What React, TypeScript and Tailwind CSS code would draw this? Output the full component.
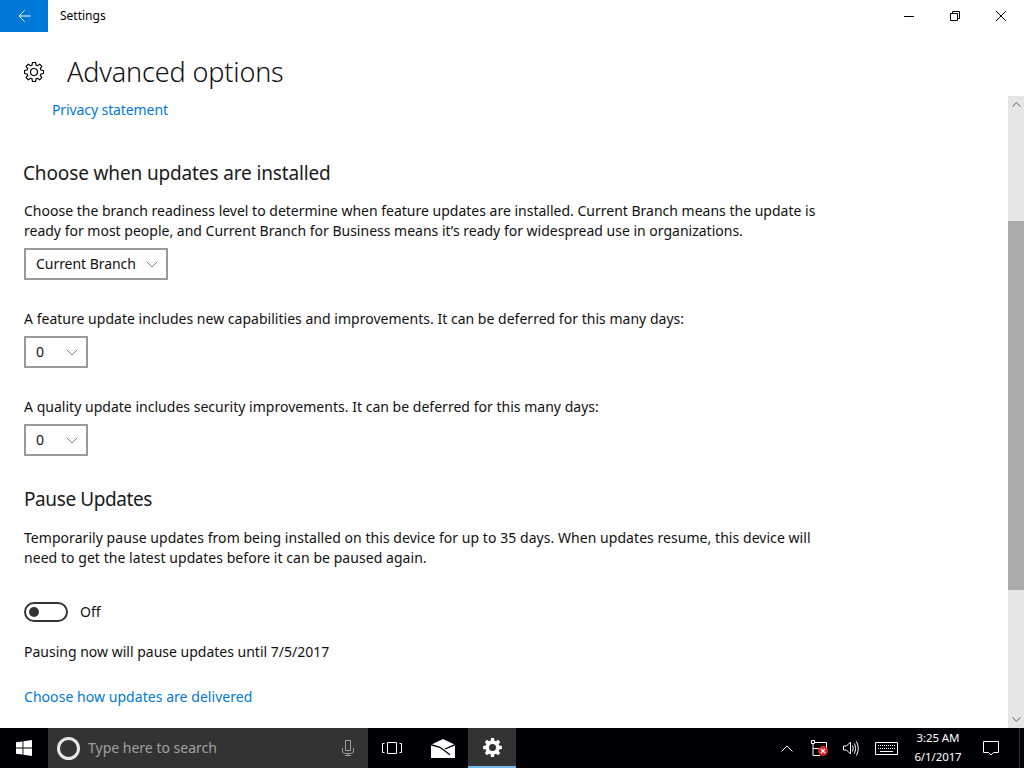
function gearPath(teeth: number, outer: number, inner: number, c: number) {
  const step = (Math.PI * 2) / teeth;
  const points: string[] = [];
  for (let i = 0; i < teeth; i++) {
    const a = i * step - Math.PI / 2;
    const corners: [number, number][] = [
      [inner, a - step * 0.36],
      [outer, a - step * 0.2],
      [outer, a + step * 0.2],
      [inner, a + step * 0.36],
    ];
    for (const [r, t] of corners) {
      points.push(`${(c + r * Math.cos(t)).toFixed(2)} ${(c + r * Math.sin(t)).toFixed(2)}`);
    }
  }
  return `M${points.join("L")}Z`;
}

function Dropdown({ label, width }: { label: string; width: string }) {
  return (
    <div className={`mt-[7px] flex h-8 items-center justify-between border-2 border-[#999999] pl-[10px] pr-2 ${width}`}>
      <span className="tracking-[-0.05px]">{label}</span>
      <svg width="12" height="7" viewBox="0 0 12 7" fill="none" stroke="#808080">
        <path d="M0.5 0.5L6 6L11.5 0.5" />
      </svg>
    </div>
  );
}

function WindowControls() {
  return (
    <div className="flex">
      <div className="flex h-8 w-[46px] items-center justify-center">
        <div className="h-px w-[10px] bg-black" />
      </div>
      <div className="flex h-8 w-[46px] items-center justify-center">
        <svg width="10" height="10" viewBox="0 0 10 10" fill="none" stroke="#000">
          <path d="M0.5 2.5h7v7h-7z M2.5 2.5v-2h7v7h-2" />
        </svg>
      </div>
      <div className="flex h-8 w-[46px] items-center justify-center">
        <svg width="10" height="10" viewBox="0 0 10 10" fill="none" stroke="#000">
          <path d="M0 0L10 10M10 0L0 10" />
        </svg>
      </div>
    </div>
  );
}

function Taskbar() {
  return (
    <footer className="flex h-10 items-stretch bg-[#000004] text-white">
      <div className="flex w-12 items-center justify-center">
        <svg width="16" height="16" viewBox="0 0 16 16" fill="#fff">
          <path d="M0 2.3L6.5 1.4V7.5H0Z M7.4 1.3L16 0V7.5H7.4Z M0 8.5H6.5V14.6L0 13.7Z M7.4 8.5H16V16L7.4 14.7Z" />
        </svg>
      </div>
      <div className="flex w-80 items-center bg-[#333333]">
        <div className="ml-[9px] h-[23px] w-[23px] rounded-full border-[3px] border-[#e6e6e6]" />
        <span className="ml-2 text-[14px] text-[#a0a0a0]">Type here to search</span>
        <svg className="ml-auto mr-[14px]" width="12" height="16" viewBox="0 0 12 16" fill="none" stroke="#a0a0a0">
          <path d="M3.5 0.5h5v10h-5z M0.5 8v2.5a3 3 0 0 0 3 3h5a3 3 0 0 0 3-3V8 M6 13.5v2 M3 15.5h6" />
        </svg>
      </div>
      <div className="flex w-12 items-center justify-center">
        <svg width="20" height="14" viewBox="0 0 20 14" fill="none" stroke="#fff">
          <path d="M5.5 1.5h9v11h-9z M2.5 2.5h-2v9h2 M17.5 2.5h2v9h-2" />
        </svg>
      </div>
      <div className="flex w-[52px] items-center justify-center pl-[2px]">
        <svg width="24" height="19" viewBox="0 0 24 19">
          <path d="M0 5.7L12 0L24 5.7V19H0Z" fill="#fff" />
          <path d="M0 5.7L9 8.3L19 15.7 M24 5.7L14 10" fill="none" stroke="#000004" strokeWidth="1.3" />
        </svg>
      </div>
      <div className="flex w-12 flex-col bg-[#333333]">
        <div className="flex flex-1 items-center justify-center">
          <svg width="19" height="19" viewBox="0 0 19 19">
            <path
              fill="#fff"
              fillRule="evenodd"
              d={`${gearPath(8, 9.5, 7, 9.5)} M9.5 6a3.5 3.5 0 1 0 0 7a3.5 3.5 0 1 0 0-7Z`}
            />
          </svg>
        </div>
        <div className="h-[2px] bg-[#76b9ed]" />
      </div>
      <div className="ml-auto flex items-center">
        <svg width="12" height="7" viewBox="0 0 12 7" fill="none" stroke="#fff">
          <path d="M0.5 6.5L6 1L11.5 6.5" />
        </svg>
        <div className="relative ml-[18px] h-[16px] w-[16px]">
          <svg width="16" height="16" viewBox="0 0 16 16" fill="none" stroke="#fff">
            <path d="M0.5 0.5h3v3h-3z M4 2.5h11.5v8 M2 4v11.5h7 M2 8.5h6" />
          </svg>
          <div className="absolute left-[7px] top-[6px] flex h-[10px] w-[10px] items-center justify-center rounded-full bg-[#d8262c]">
            <svg width="6" height="6" viewBox="0 0 6 6" stroke="#fff" strokeWidth="1.2">
              <path d="M1 1L5 5M5 1L1 5" />
            </svg>
          </div>
        </div>
        <svg className="ml-4" width="16" height="15" viewBox="0 0 16 15" fill="none" stroke="#fff">
          <path d="M0.5 5h3l4-4v12l-4-4h-3z M9.5 4.5q1.5 3 0 6 M11.5 2.5q2.5 5 0 10 M13.5 0.5q3.5 7 0 14" />
        </svg>
        <svg className="ml-4" width="23" height="13" viewBox="0 0 23 13" fill="none" stroke="#fff">
          <path d="M0.5 0.5h22v12h-22z M5 9.5h13" />
          <path d="M3 3.5h17M3 6.5h17" strokeDasharray="1 1" />
        </svg>
        <div className="ml-1 flex w-[72px] flex-col items-center pb-[2px] text-[11.5px] leading-[19px] tracking-[-0.1px]">
          <span>3:25 AM</span>
          <span>6/1/2017</span>
        </div>
        <div className="flex w-[45px] items-center pl-[9px]">
          <svg width="16" height="15" viewBox="0 0 16 15" fill="none" stroke="#fff">
            <path d="M0.5 0.5h15v11h-5l-2.5 2.5l-2.5-2.5h-5z" />
          </svg>
        </div>
        <div className="mr-1 h-full w-px bg-[#333333]" />
      </div>
    </footer>
  );
}

export default function App() {
  return (
    <div className="flex h-screen flex-col overflow-hidden bg-white font-['Noto_Sans','Open_Sans',sans-serif] text-[14px] leading-5 text-[#111111]">
      <header className="flex h-8 items-center">
        <div className="flex h-8 w-12 items-center justify-center bg-[#0078d7]">
          <svg width="13" height="12" viewBox="0 0 13 12" fill="none" stroke="#fff">
            <path d="M12.5 6H1M6.5 0.5L1 6L6.5 11.5" />
          </svg>
        </div>
        <span className="ml-3 text-[12px] text-black">Settings</span>
        <div className="ml-auto">
          <WindowControls />
        </div>
      </header>

      <div className="flex h-16 items-center pl-6 pt-4">
        <svg width="20" height="20" viewBox="0 0 20 20" fill="none" stroke="#000" strokeWidth="1.2">
          <path d={gearPath(8, 9.7, 7.2, 10)} strokeLinejoin="round" />
          <circle cx="10" cy="10" r="3.5" />
        </svg>
        <h1 className="ml-[23px] text-[27px] font-light tracking-[-0.15px] text-[#111111]">Advanced options</h1>
      </div>

      <div className="flex min-h-0 flex-1">
        <main className="min-w-0 flex-1 overflow-hidden pl-6">
          <div className="mt-1 pl-7 tracking-[-0.1px] text-[#0078d7]">Privacy statement</div>

          <h2 className="mt-[39px] ml-[-1px] text-[19px] leading-7 tracking-[-0.14px] text-[#1a1a1a]">Choose when updates are installed</h2>
          <p className="mt-[14px] w-[800px]">
            Choose the branch readiness level to determine when feature updates are installed. Current Branch means the update is ready for most people, and Current Branch for Business means it’s ready for widespread use in organizations.
          </p>
          <Dropdown label="Current Branch" width="w-[144px]" />

          <p className="mt-[29px] tracking-[0.02px]">A feature update includes new capabilities and improvements. It can be deferred for this many days:</p>
          <Dropdown label="0" width="w-[64px]" />

          <p className="mt-[29px] tracking-[0.02px]">A quality update includes security improvements. It can be deferred for this many days:</p>
          <Dropdown label="0" width="w-[64px]" />

          <h2 className="mt-[29px] text-[19px] leading-7 tracking-[-0.4px] text-[#1a1a1a]">Pause Updates</h2>
          <p className="mt-[15px] w-[800px] tracking-[0.05px]">
            Temporarily pause updates from being installed on this device for up to 35 days. When updates resume, this device will need to get the latest updates before it can be paused again.
          </p>

          <div className="mt-[33px] flex items-center">
            <div className="flex h-5 w-11 items-center rounded-full border-2 border-[#333333] pl-[3px]">
              <div className="h-[10px] w-[10px] rounded-full bg-[#333333]" />
            </div>
            <span className="ml-3 pt-px">Off</span>
          </div>

          <p className="mt-5">Pausing now will pause updates until 7/5/2017</p>
          <p className="mt-[25px] tracking-[0.05px] text-[#0078d7]">Choose how updates are delivered</p>
        </main>

        <div className="flex w-4 flex-col bg-[#e6e6e6]">
          <div className="flex h-[17px] items-center justify-center">
            <svg width="9" height="5" viewBox="0 0 9 5" fill="none" stroke="#606060">
              <path d="M0.5 4.5L4.5 0.7L8.5 4.5" />
            </svg>
          </div>
          <div className="mt-[108px] h-[369px] bg-[#ababab]" />
          <div className="mt-auto flex h-[17px] items-center justify-center">
            <svg width="9" height="5" viewBox="0 0 9 5" fill="none" stroke="#606060">
              <path d="M0.5 0.5L4.5 4.3L8.5 0.5" />
            </svg>
          </div>
        </div>
      </div>

      <Taskbar />
    </div>
  );
}
